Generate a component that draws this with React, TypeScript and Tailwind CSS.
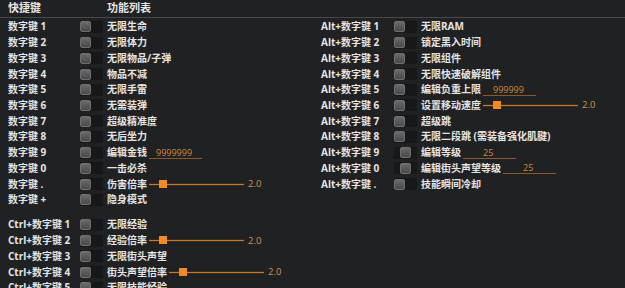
import React from "react";

type Ctl = { kind: "input"; value: string; pad: number } | { kind: "slider" } | undefined;
type Row = { key: string; label: string; ctl?: Ctl; shift?: boolean };

const left: Row[] = [
  { key: "数字键 1", label: "无限生命" },
  { key: "数字键 2", label: "无限体力" },
  { key: "数字键 3", label: "无限物品/子弹" },
  { key: "数字键 4", label: "物品不减" },
  { key: "数字键 5", label: "无限手雷" },
  { key: "数字键 6", label: "无需装弹" },
  { key: "数字键 7", label: "超级精准度" },
  { key: "数字键 8", label: "无后坐力" },
  { key: "数字键 9", label: "编辑金钱", ctl: { kind: "input", value: "9999999", pad: 7 } },
  { key: "数字键 0", label: "一击必杀" },
  { key: "数字键 .", label: "伤害倍率", ctl: { kind: "slider" } },
  { key: "数字键 +", label: "隐身模式" },
];

const ctrl: Row[] = [
  { key: "Ctrl+数字键 1", label: "无限经验" },
  { key: "Ctrl+数字键 2", label: "经验倍率", ctl: { kind: "slider" } },
  { key: "Ctrl+数字键 3", label: "无限街头声望" },
  { key: "Ctrl+数字键 4", label: "街头声望倍率", ctl: { kind: "slider" } },
  { key: "Ctrl+数字键 5", label: "无限技能经验" },
];

const right: Row[] = [
  { key: "Alt+数字键 1", label: "无限RAM" },
  { key: "Alt+数字键 2", label: "锁定黑入时间" },
  { key: "Alt+数字键 3", label: "无限组件" },
  { key: "Alt+数字键 4", label: "无限快速破解组件" },
  { key: "Alt+数字键 5", label: "编辑负重上限", ctl: { kind: "input", value: "999999", pad: 10 } },
  { key: "Alt+数字键 6", label: "设置移动速度", ctl: { kind: "slider" } },
  { key: "Alt+数字键 7", label: "超级跳" },
  { key: "Alt+数字键 8", label: "无限二段跳 (需装备强化肌腱)" },
  { key: "Alt+数字键 9", label: "编辑等级", ctl: { kind: "input", value: "25", pad: 20 }, shift: true },
  { key: "Alt+数字键 0", label: "编辑街头声望等级", ctl: { kind: "input", value: "25", pad: 20 }, shift: true },
  { key: "Alt+数字键 .", label: "技能瞬间冷却" },
];

function Toggle({ shift }: { shift?: boolean }) {
  return (
    <div className="w-[27px] shrink-0 flex items-center">
      <div className="relative w-[23px] h-[12px] bg-[#17181a] rounded-[1px]">
        <div
          className={
            "absolute top-[0.5px] w-[11px] h-[11px] rounded-[2px] border border-[#707070] bg-gradient-to-b from-[#6a6a6a] to-[#4a4a4a] " +
            (shift ? "left-[6px]" : "left-0")
          }
        />
      </div>
    </div>
  );
}

function Slider() {
  return (
    <div className="flex items-center ml-[2px]">
      <div className="relative w-[95px] h-[3px] bg-[#c07a32] border-y border-[#3a2a1a]">
        <div className="absolute left-[10px] top-[-4px] w-[8px] h-[8px] bg-[#ef8a26]" />
      </div>
      <span className="ml-[4px] text-[9.5px] text-[#c8955a] font-normal">2.0</span>
    </div>
  );
}

function Input({ value, pad }: { value: string; pad: number }) {
  return (
    <div className="ml-[2px] w-[53px] h-[12px] border-b border-[#8a5a2c] flex items-end">
      <span className="text-[9px] leading-[11px] text-[#d0893a] font-normal" style={{ paddingLeft: pad }}>
        {value}
      </span>
    </div>
  );
}

function RowView({ r, keyW }: { r: Row; keyW: number }) {
  return (
    <div className="flex items-center h-[15.72px] whitespace-nowrap">
      <div className="shrink-0" style={{ width: keyW }}>
        {r.key}
      </div>
      <Toggle shift={r.shift} />
      <span>{r.label}</span>
      {r.ctl?.kind === "slider" && <Slider />}
      {r.ctl?.kind === "input" && <Input value={r.ctl.value} pad={r.ctl.pad} />}
    </div>
  );
}

export default function App() {
  return (
    <div className="w-[625px] h-[288px] overflow-hidden bg-[#202123] text-[#e4e4e4] text-[10px] font-bold font-['Open_Sans','Noto_Sans_CJK_SC',sans-serif]">
      <div className="h-[18px] flex items-center text-[11px] border-b border-[#46484b]">
        <div className="pl-[8px] w-[107px]">快捷键</div>
        <div>功能列表</div>
      </div>
      <div className="flex pt-[1px]">
        <div className="w-[313px] pl-[8px]">
          {left.map((r) => (
            <RowView key={r.key} r={r} keyW={72} />
          ))}
          <div className="h-[9.5px]" />
          {ctrl.map((r) => (
            <RowView key={r.key} r={r} keyW={72} />
          ))}
        </div>
        <div className="flex-1 pl-[8px]">
          {right.map((r) => (
            <RowView key={r.key} r={r} keyW={73} />
          ))}
        </div>
      </div>
    </div>
  );
}
